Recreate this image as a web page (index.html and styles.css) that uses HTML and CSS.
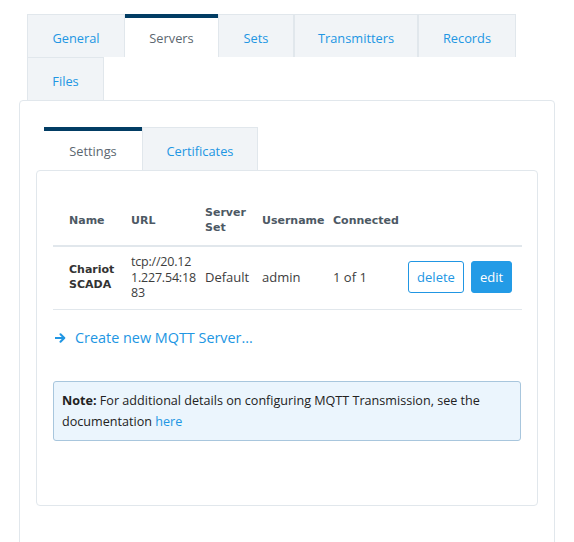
FILE: index.html
```html
<!DOCTYPE html>
<html>
<head>
<meta charset="utf-8">
<link rel="stylesheet" href="styles.css">
</head>
<body>
<div class="page">
  <ul class="tabs top-tabs">
    <li class="tab">General</li>
    <li class="tab active">Servers</li>
    <li class="tab">Sets</li>
    <li class="tab">Transmitters</li>
    <li class="tab">Records</li>
    <li class="tab">Files</li>
  </ul>
  <div class="panel outer">
    <ul class="tabs inner-tabs">
      <li class="tab active">Settings</li>
      <li class="tab">Certificates</li>
    </ul>
    <div class="panel inner">
      <table class="servers">
        <colgroup>
          <col class="c-name"><col class="c-url"><col class="c-set"><col class="c-user"><col class="c-conn"><col class="c-act">
        </colgroup>
        <thead>
          <tr>
            <th>Name</th>
            <th>URL</th>
            <th>Server Set</th>
            <th>Username</th>
            <th>Connected</th>
            <th></th>
          </tr>
        </thead>
        <tbody>
          <tr>
            <td class="name">Chariot SCADA</td>
            <td class="url">tcp://20.12<wbr>1.227.54:18<wbr>83</td>
            <td>Default</td>
            <td>admin</td>
            <td>1 of 1</td>
            <td class="actions"><button class="btn btn-outline">delete</button><button class="btn btn-solid">edit</button></td>
          </tr>
        </tbody>
      </table>
      <a class="create" href="#"><svg class="arrow" width="11" height="10" viewBox="0 0 11 10"><path d="M0.5 5H9M5.5 1.2L9.3 5L5.5 8.8" fill="none" stroke="#2196e3" stroke-width="2" stroke-linecap="round" stroke-linejoin="round"/></svg><span>Create new MQTT Server...</span></a>
      <div class="note"><p class="note-text"><b>Note:</b> For additional details on configuring MQTT Transmission, see the documentation <a href="#">here</a></p></div>
    </div>
  </div>
</div>
</body>
</html>
```

FILE: styles.css
```css
* { box-sizing: border-box; }
html, body { margin: 0; padding: 0; background: #fff; }
body {
  font-family: "Open Sans", "Noto Sans", sans-serif;
  color: #333;
}
.page { padding: 14px 19px 0 19px; }
.tabs {
  list-style: none;
  margin: 0;
  padding: 0;
  display: flex;
  flex-wrap: wrap;
}
.top-tabs { margin: 0 8px; }
.tab {
  height: 43px;
  padding: 4px 20px 0 20px;
  display: flex;
  align-items: center;
  justify-content: center;
  font-size: 12.8px;
  color: #2196e3;
  background: #f1f4f7;
  border: 1px solid #e1e7ec;
  border-bottom: none;
}
.top-tabs .tab:nth-child(1) { width: 98px; }
.top-tabs .tab:nth-child(2) { width: 93px; }
.top-tabs .tab:nth-child(3) { width: 76px; }
.top-tabs .tab:nth-child(4) { width: 124px; }
.top-tabs .tab:nth-child(5) { width: 98px; }
.top-tabs .tab:nth-child(6) { width: 77px; }
.tab.active {
  background: #fff;
  color: #5c6770;
  border: none;
  border-top: 4px solid #023d64;
  padding-top: 0;
}
.panel {
  border: 1px solid #e1e7ec;
  border-radius: 4px;
}
.outer {
  padding: 26px 16px 40px 16px;
  height: 460px;
  border-bottom-left-radius: 0;
  border-bottom-right-radius: 0;
}
.inner-tabs { margin-left: 8px; }
.inner-tabs .tab:nth-child(1) { width: 98px; }
.inner-tabs .tab:nth-child(2) { width: 116px; }
.inner { padding: 16px 16px 0 16px; height: 336px; }
.servers {
  width: 469px;
  margin-top: 8px;
  border-collapse: collapse;
  table-layout: fixed;
  font-size: 13px;
}
.c-name { width: 76px; }
.c-url { width: 74px; }
.c-set { width: 57px; }
.c-user { width: 71px; }
.c-conn { width: 75px; }
.c-act { width: 116px; }
.servers th {
  font-family: "DejaVu Sans", sans-serif;
  font-weight: bold;
  font-size: 11px;
  color: #4d5964;
  text-align: left;
  line-height: 15px;
  padding: 10px 0 10px 2px;
  border-bottom: 2px solid #e1e7ec;
  vertical-align: middle;
}
.servers td {
  line-height: 15.5px;
  padding: 7px 0 8px 2px;
  border-bottom: 1px solid #e1e7ec;
  vertical-align: middle;
  color: #3d3d3d;
}
.servers th:first-child, .servers td:first-child { padding-left: 16px; }
.servers td.name {
  font-family: "DejaVu Sans", sans-serif;
  font-weight: bold;
  font-size: 11px;
  color: #333;
}
.servers td.url { font-size: 12.5px; letter-spacing: -0.2px; }
.servers td.actions {
  text-align: right;
  padding-right: 10px;
  white-space: nowrap;
}
.btn {
  font-family: "Open Sans", "Noto Sans", sans-serif;
  font-size: 13px;
  height: 32px;
  border-radius: 3px;
  padding: 0 6px;
  vertical-align: middle;
  cursor: pointer;
}
.btn-outline {
  background: #fff;
  color: #2196e3;
  border: 1px solid #2196e3;
  width: 56px;
}
.btn-solid {
  background: #239be6;
  color: #fff;
  border: 1px solid #239be6;
  width: 41px;
  margin-left: 7px;
}
.create {
  display: flex;
  align-items: center;
  margin: 18px 0 0 2px;
  height: 20px;
  color: #2196e3;
  text-decoration: none;
  font-size: 14.4px;
}
.arrow { margin-right: 9px; }
.note {
  margin-top: 33px;
  background: #ebf5fd;
  border: 1px solid #a8c6dd;
  border-radius: 3px;
  padding: 8px 8px 8px 8px;
}
.note-text {
  margin: 0;
  font-size: 12.6px;
  line-height: 21px;
  color: #222;
}
.note a { color: #2196e3; text-decoration: none; }
```
